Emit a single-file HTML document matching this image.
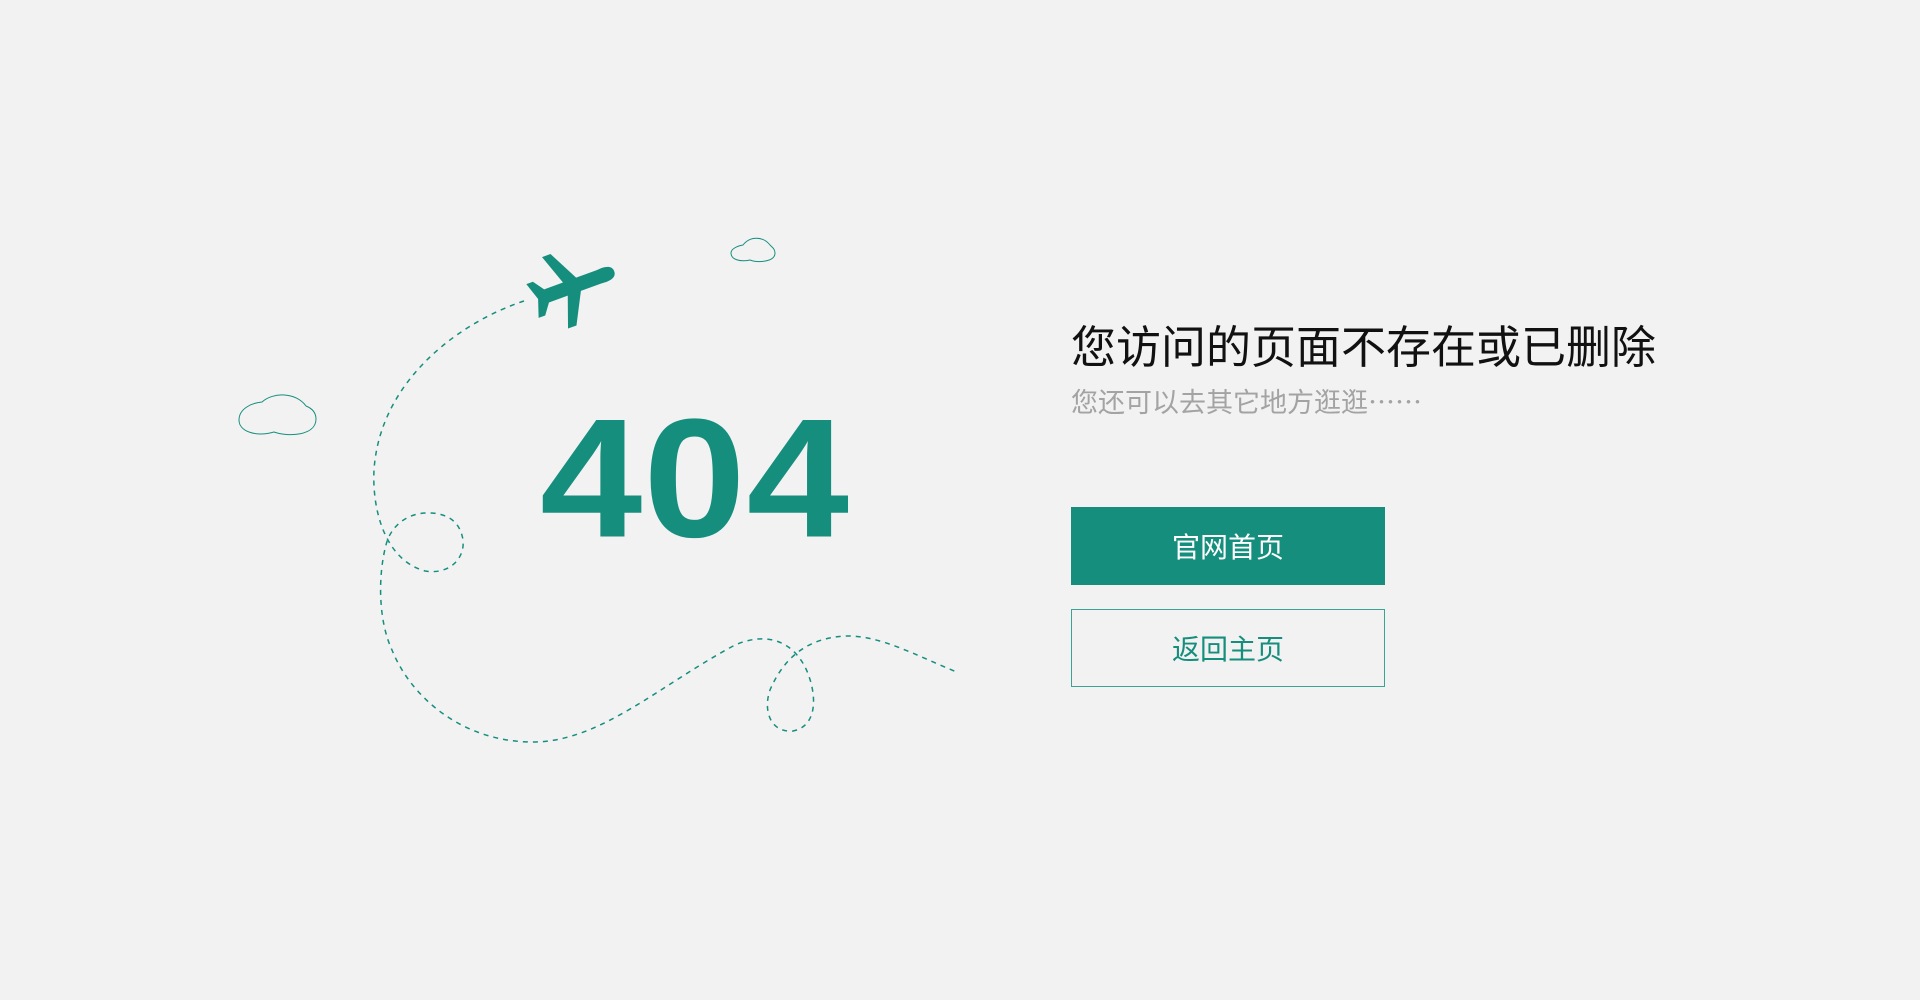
<!DOCTYPE html>
<html><head><meta charset="utf-8"><style>
html,body{margin:0;padding:0;width:1920px;height:1000px;background:#f2f2f2;overflow:hidden;font-family:"Liberation Sans","Noto Sans CJK SC",sans-serif}
.abs{position:absolute}
.t404{left:540px;top:393px;font-size:184px;font-weight:bold;color:#168e7e;line-height:1;letter-spacing:1px;transform:scaleY(0.92);transform-origin:0 0}
.title{left:1071px;top:325px;font-size:45px;line-height:1;color:#111;white-space:nowrap}
.sub{left:1071px;top:387px;font-size:27px;line-height:1;color:#a3a3a3;white-space:nowrap}
.sub span{font-family:"Noto Sans CJK SC",sans-serif}
.btn{left:1071px;width:314px;height:78px;box-sizing:border-box;display:flex;align-items:center;justify-content:center;font-size:28px}
.b1{top:507px;background:#168e7e;color:#fff}
.b2{top:609px;border:1px solid #3aa396;color:#168e7e}
</style></head><body>
<svg class="abs" style="left:0;top:0" width="1920" height="1000">
<path d="M524,301 C460,322 380,380 374,470 C372,510 385,560 425,571 C450,575 465,558 463,540 C460,520 445,512 425,513 C405,514 390,528 386,545 C378,575 378,620 392,650 C410,695 460,742 533,742 C600,742 660,685 735,645 C765,632 790,640 804,665 C815,685 822,725 793,731 C770,733 763,710 770,690 C785,655 810,638 845,636 C880,635 915,655 959,673" fill="none" stroke="#168e7e" stroke-width="1.5" stroke-dasharray="5,5"/>
<g transform="translate(571,287) rotate(-20)" fill="#168e7e">
<path d="M46,0 C46,-7 38,-8 30,-7 L8,-7 L-8,-38 L-17,-38 L-6,-7 L-26,-7 L-34,-18 L-41,-18 L-35,0 L-41,18 L-34,18 L-26,7 L-6,7 L-17,38 L-8,38 L8,7 L30,7 C38,8 46,7 46,0 Z"/>
</g>
<path d="M262,402 C251,403 239,409 239,420 C239,432 257,437 274,432 C288,437 316,436 316,419 C316,412 311,408 306,406 C296,392 273,392 262,402 Z" fill="none" stroke="#168e7e" stroke-width="1"/>
<path d="M743,245 C737,246 731,249 731,253 C731,260 741,262 750,260 C758,263 775,262 775,253 C775,249 772,247 770,245 C763,236 750,236 743,245 Z" fill="none" stroke="#168e7e" stroke-width="1"/>
</svg>
<div class="abs t404">404</div>
<div class="abs title">您访问的页面不存在或已删除</div>
<div class="abs sub">您还可以去其它地方逛逛<span>……</span></div>
<div class="abs btn b1">官网首页</div>
<div class="abs btn b2">返回主页</div>
</body></html>
